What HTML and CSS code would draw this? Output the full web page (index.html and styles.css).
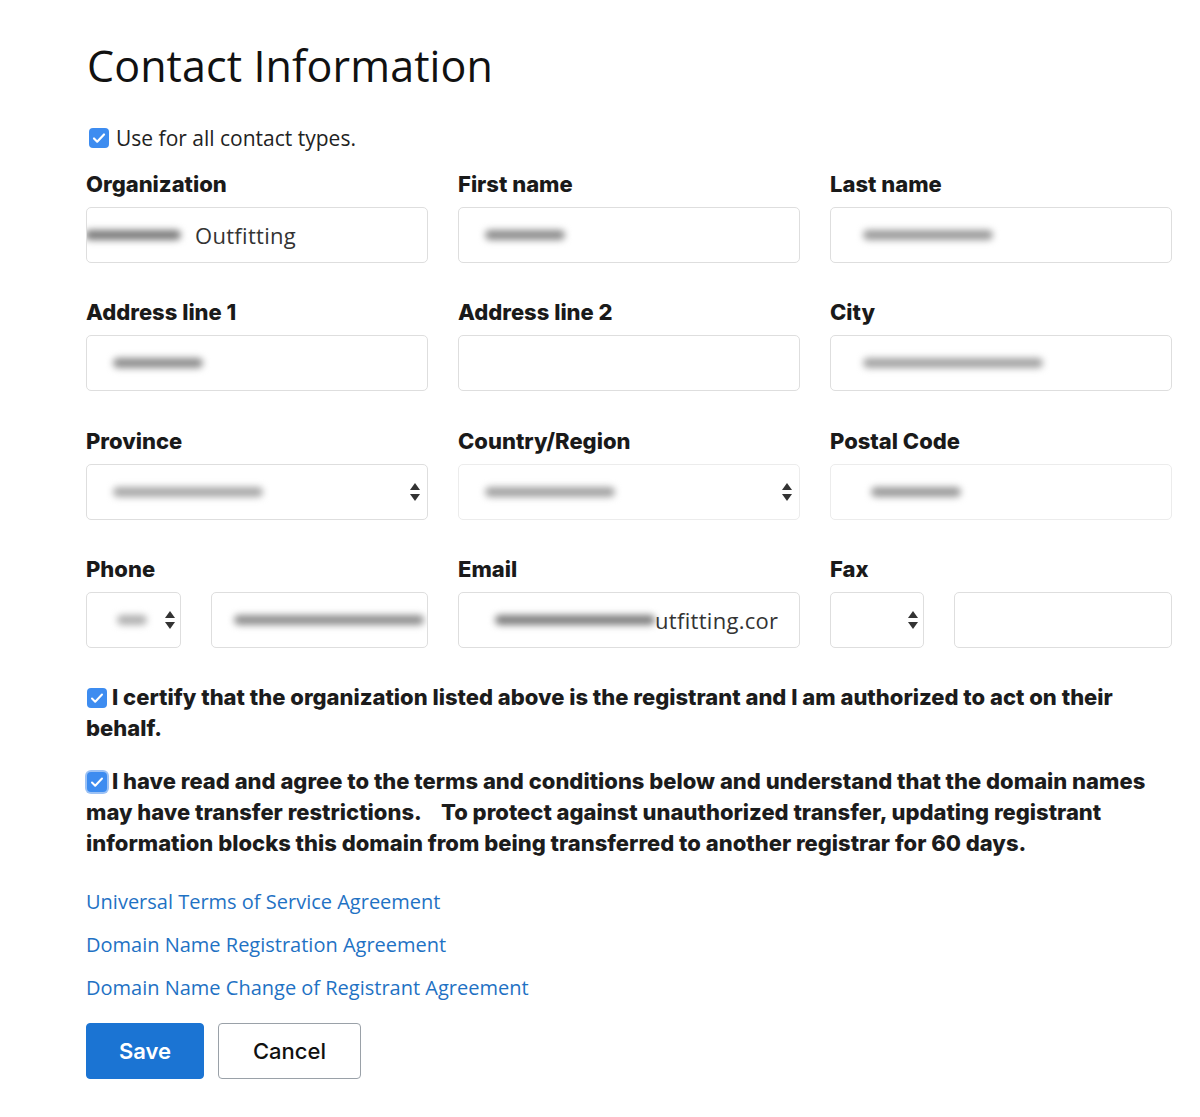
FILE: index.html
```html
<!DOCTYPE html>
<html>
<head>
<meta charset="utf-8">
<link rel="stylesheet" href="styles.css">
</head>
<body>
<div class="page">
  <h1 class="title">Contact Information</h1>
  <label class="use-all"><span class="cb"><svg viewBox="0 0 20 20"><path d="M5 10.5l3.2 3.2L15 6.5" fill="none" stroke="#fff" stroke-width="2.2" stroke-linecap="round" stroke-linejoin="round"/></svg></span>Use for all contact types.</label>

  <div class="grid">
    <div class="field">
      <div class="label">Organization</div>
      <div class="input"><span class="blur b-org"></span><span class="val">Outfitting</span></div>
    </div>
    <div class="field">
      <div class="label">First name</div>
      <div class="input"><span class="blur b-first"></span></div>
    </div>
    <div class="field">
      <div class="label">Last name</div>
      <div class="input"><span class="blur b-last"></span></div>
    </div>

    <div class="field">
      <div class="label">Address line 1</div>
      <div class="input"><span class="blur b-addr"></span></div>
    </div>
    <div class="field">
      <div class="label">Address line 2</div>
      <div class="input"></div>
    </div>
    <div class="field">
      <div class="label">City</div>
      <div class="input"><span class="blur b-city"></span></div>
    </div>

    <div class="field">
      <div class="label">Province</div>
      <div class="input select"><span class="blur b-prov"></span><span class="arrows"></span></div>
    </div>
    <div class="field">
      <div class="label">Country/Region</div>
      <div class="input select faded"><span class="blur b-country"></span><span class="arrows"></span></div>
    </div>
    <div class="field">
      <div class="label">Postal Code</div>
      <div class="input faded"><span class="blur b-postal"></span></div>
    </div>

    <div class="field">
      <div class="label">Phone</div>
      <div class="pair pair-phone">
        <div class="input select small"><span class="blur b-cc"></span><span class="arrows"></span></div>
        <div class="input"><span class="blur b-phone"></span></div>
      </div>
    </div>
    <div class="field">
      <div class="label">Email</div>
      <div class="input"><span class="blur b-email"></span><span class="val val-email">utfitting.cor</span></div>
    </div>
    <div class="field">
      <div class="label">Fax</div>
      <div class="pair pair-fax">
        <div class="input select small"><span class="arrows"></span></div>
        <div class="input"></div>
      </div>
    </div>
  </div>

  <p class="agree"><span class="cb cb-inline"><svg viewBox="0 0 20 20"><path d="M5 10.5l3.2 3.2L15 6.5" fill="none" stroke="#fff" stroke-width="2" stroke-linecap="round" stroke-linejoin="round"/></svg></span>I certify that the organization listed above is the registrant and I am authorized to act on their behalf.</p>

  <p class="agree agree-2"><span class="cb cb-inline cb-focus"><svg viewBox="0 0 20 20"><path d="M5 10.5l3.2 3.2L15 6.5" fill="none" stroke="#fff" stroke-width="2" stroke-linecap="round" stroke-linejoin="round"/></svg></span>I have read and agree to the terms and conditions below and understand that the domain names may have transfer restrictions.&nbsp;&nbsp;&nbsp; To protect against unauthorized transfer, updating registrant information blocks this domain from being transferred to another registrar for 60 days.</p>

  <ul class="links">
    <li><a href="#">Universal Terms of Service Agreement</a></li>
    <li><a href="#">Domain Name Registration Agreement</a></li>
    <li><a href="#">Domain Name Change of Registrant Agreement</a></li>
  </ul>

  <div class="buttons">
    <button class="btn btn-save">Save</button>
    <button class="btn btn-cancel">Cancel</button>
  </div>
</div>
</body>
</html>
```

FILE: styles.css
```css
* { box-sizing: border-box; }
html, body { margin: 0; padding: 0; background: #fff; }
body {
  font-family: "Inter", "Liberation Sans", sans-serif;
  color: #111;
}
.page {
  width: 1200px;
  padding: 38px 28px 0 86px;
}
.title {
  margin: 0;
  font-family: "Open Sans", "Liberation Sans", sans-serif;
  font-weight: 400;
  font-size: 43px;
  line-height: 56px;
  letter-spacing: 0.1px;
  color: #111;
  padding-left: 1px;
}
.use-all {
  display: flex;
  align-items: center;
  margin-top: 29px;
  padding-left: 3px;
  font-family: "Open Sans", "Liberation Sans", sans-serif;
  font-size: 21px;
  line-height: 30px;
  color: #222;
}
.cb {
  width: 20px;
  height: 20px;
  border-radius: 4px;
  background: #3d8cf0;
  display: inline-flex;
  align-items: center;
  justify-content: center;
  margin-right: 7px;
  flex: none;
}
.cb svg { width: 20px; height: 20px; display: block; }
.grid {
  display: grid;
  grid-template-columns: repeat(3, 342px);
  column-gap: 30px;
  row-gap: 34.3px;
  margin-top: 16px;
}
.label {
  font-family: "Inter", "Liberation Sans", sans-serif;
  font-weight: 800;
  font-size: 22px;
  line-height: 30px;
  letter-spacing: 0;
  color: #1a1a1a;
  margin-bottom: 8px;
}
.input {
  position: relative;
  height: 56px;
  border: 1px solid #dedede;
  border-radius: 5px;
  background: #fff;
  display: flex;
  align-items: center;
  overflow: hidden;
}
.input.faded { border-color: #ececec; }
.pair { display: flex; gap: 30px; }
.pair-phone .small { width: 95px; flex: none; }
.pair-phone .input:last-child { flex: 1; }
.pair-fax .small { width: 94px; flex: none; }
.pair-fax .input:last-child { flex: 1; }
.val {
  font-family: "Open Sans", "Liberation Sans", sans-serif;
  font-size: 22px;
  color: #333;
  letter-spacing: 0.3px;
}
.blur {
  display: block;
  height: 10px;
  border-radius: 5px;
  background: #8a8a8a;
  filter: blur(3.5px);
  flex: none;
}
.b-org { width: 96px; margin-left: -2px; margin-right: 14px; background: #7a7a7a; }
.b-first { width: 80px; margin-left: 26px; background: #8c8c8c; }
.b-last { width: 130px; margin-left: 32px; background: #9a9a9a; }
.b-addr { width: 90px; margin-left: 26px; background: #8d8d8d; }
.b-city { width: 180px; margin-left: 32px; background: #a3a3a3; }
.b-prov { width: 150px; margin-left: 26px; background: #a8a8a8; }
.b-country { width: 130px; margin-left: 26px; background: #a2a2a2; }
.b-postal { width: 90px; margin-left: 40px; background: #9a9a9a; }
.b-cc { width: 30px; margin-left: 30px; background: #b0b0b0; }
.b-phone { width: 190px; margin-left: 22px; background: #8f8f8f; }
.b-email { width: 160px; margin-left: 36px; margin-right: 0; background: #7e7e7e; }
.arrows {
  position: absolute;
  right: 7px;
  top: 50%;
  width: 10px;
  height: 18px;
  margin-top: -9px;
}
.arrows::before, .arrows::after {
  content: "";
  position: absolute;
  left: 0;
  border-left: 5px solid transparent;
  border-right: 5px solid transparent;
}
.arrows::before { top: 0; border-bottom: 7px solid #333; }
.arrows::after { bottom: 0; border-top: 7px solid #333; }
.pair .small .arrows { right: 5px; }
.agree {
  margin: 34px 0 0;
  font-family: "Inter", "Liberation Sans", sans-serif;
  font-weight: 800;
  font-size: 22px;
  line-height: 31px;
  color: #1c1c1c;
  letter-spacing: 0;
}
.agree-2 { margin-top: 22px; }
.cb-inline {
  vertical-align: -3px;
  margin-right: 5px;
  margin-left: 1px;
}
.cb-focus { box-shadow: 0 0 0 2px #9cc2f5; }
.links {
  list-style: none;
  margin: 21px 0 0;
  padding: 0;
}
.links li {
  font-family: "Open Sans", "Liberation Sans", sans-serif;
  font-size: 20px;
  line-height: 43px;
}
.links a { color: #1f72c4; text-decoration: none; }
.buttons {
  display: flex;
  gap: 14px;
  margin-top: 14px;
}
.btn {
  height: 56px;
  border-radius: 4px;
  font-family: "Inter", "Liberation Sans", sans-serif;
  font-size: 22px;
  cursor: pointer;
}
.btn-save {
  width: 118px;
  background: #1b74d3;
  border: 1px solid #1b74d3;
  color: #fff;
  font-weight: 600;
}
.btn-cancel {
  width: 143px;
  background: #fff;
  border: 1px solid #9aa1a8;
  color: #111;
  font-weight: 500;
}
```
